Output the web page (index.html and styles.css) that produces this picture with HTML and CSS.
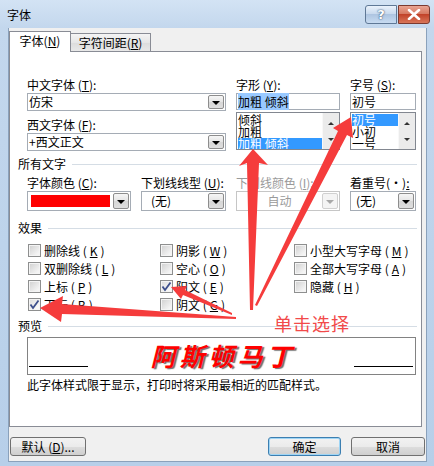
FILE: index.html
```html
<!DOCTYPE html>
<html lang="zh-CN">
<head>
    <meta charset="UTF-8">
    <title>字体</title>
    <link rel="stylesheet" href="styles.css">
</head>
<body>
    <div class="window">
        <!-- Title bar -->
        <div class="titlebar">
            <span class="title">字体</span>
            <div class="caption-btns">
                <span class="cap help">?</span>
                <span class="cap close">
                    <svg width="14" height="11" viewBox="0 0 14 11"><path d="M2 1 L12 10 M12 1 L2 10" stroke="#fff" stroke-width="2.6" stroke-linecap="round"/></svg>
                </span>
            </div>
        </div>

        <div class="client">
            <div class="tabs">
                <div class="tab active">字体(<u>N</u>)</div>
                <div class="tab">字符间距(<u>R</u>)</div>
            </div>

            <div class="panel">
                <!-- Font family / style / size -->
                <div class="font-grid">
                    <div class="field-col">
                        <div class="lbl">中文字体 (<u>T</u>):</div>
                        <div class="combo"><span class="combo-text">仿宋</span><span class="drop"></span></div>
                        <div class="lbl second">西文字体 (<u>F</u>):</div>
                        <div class="combo"><span class="combo-text">+西文正文</span><span class="drop"></span></div>
                    </div>
                    <div class="field-col">
                        <div class="lbl">字形 (<u>Y</u>):</div>
                        <div class="textbox"><span class="hl">加粗 倾斜</span></div>
                        <div class="list">
                            <div class="items">
                                <div>倾斜</div>
                                <div>加粗</div>
                                <div class="sel">加粗 倾斜</div>
                            </div>
                            <div class="vscroll"><span class="up"></span><span class="down"></span></div>
                        </div>
                    </div>
                    <div class="field-col">
                        <div class="lbl">字号 (<u>S</u>):</div>
                        <div class="textbox">初号</div>
                        <div class="list">
                            <div class="items">
                                <div class="sel">初号</div>
                                <div>小初</div>
                                <div>一号</div>
                            </div>
                            <div class="vscroll"><span class="up"></span><span class="down"></span></div>
                        </div>
                    </div>
                </div>

                <div class="group-title">所有文字</div>
                <div class="all-row">
                    <div class="field-col">
                        <div class="lbl">字体颜色 (<u>C</u>):</div>
                        <div class="combo tall"><span class="swatch"></span><span class="drop"></span></div>
                    </div>
                    <div class="field-col">
                        <div class="lbl">下划线线型 (<u>U</u>):</div>
                        <div class="combo tall"><span class="combo-text pad-u">(无)</span><span class="drop"></span></div>
                    </div>
                    <div class="field-col disabled">
                        <div class="lbl">下划线颜色 (<u>I</u>):</div>
                        <div class="combo tall"><span class="combo-text center">自动</span><span class="drop"></span></div>
                    </div>
                    <div class="field-col">
                        <div class="lbl">着重号(·)<u>:</u></div>
                        <div class="combo tall"><span class="combo-text pad-e">(无)</span><span class="drop"></span></div>
                    </div>
                </div>

                <div class="group-title">效果</div>
                <div class="effects">
                    <div class="cb-item"><span class="cb"></span>删除线 (<u>K</u>)</div>
                    <div class="cb-item"><span class="cb"></span>阴影 (<u>W</u>)</div>
                    <div class="cb-item"><span class="cb"></span>小型大写字母 (<u>M</u>)</div>
                    <div class="cb-item"><span class="cb"></span>双删除线 (<u>L</u>)</div>
                    <div class="cb-item"><span class="cb"></span>空心 (<u>O</u>)</div>
                    <div class="cb-item"><span class="cb"></span>全部大写字母 (<u>A</u>)</div>
                    <div class="cb-item"><span class="cb"></span>上标 (<u>P</u>)</div>
                    <div class="cb-item"><span class="cb checked"><svg width="11" height="11" viewBox="0 0 11 11"><path d="M1.5 5.5 L4 9 L9.5 1.5" fill="none" stroke="#3d4f8c" stroke-width="1.8"/></svg></span>阳文 (<u>E</u>)</div>
                    <div class="cb-item"><span class="cb"></span>隐藏 (<u>H</u>)</div>
                    <div class="cb-item"><span class="cb checked"><svg width="11" height="11" viewBox="0 0 11 11"><path d="M1.5 5.5 L4 9 L9.5 1.5" fill="none" stroke="#3d4f8c" stroke-width="1.8"/></svg></span>下标 (<u>B</u>)</div>
                    <div class="cb-item"><span class="cb"></span>阴文 (<u>G</u>)</div>
                </div>

                <div class="group-title">预览</div>
                <div class="preview">
                    <span class="base-line"></span>
                    <span class="sample">阿斯顿马丁</span>
                    <span class="base-line"></span>
                </div>
                <p class="note">此字体样式限于显示，打印时将采用最相近的匹配样式。</p>
            </div>

            <div class="buttons">
                <div class="btn wide">默认 (<u>D</u>)...</div>
                <div class="btn ok">确定</div>
                <div class="btn">取消</div>
            </div>
        </div>

        <!-- red annotation arrows -->
        <svg class="annot" width="434" height="466" viewBox="0 0 434 466">
            <g fill="#f53c3c">
                <polygon points="253,149 268,165 259,163 253,310 250,310 247,163 239,166"/>
                <polygon points="351,117 353,138 347,135 257,306 255,305 338,131 333,128"/>
                <polygon points="171,287 187,286 185,290 232,313 232,315 183,295 181,299"/>
                <polygon points="40,308 63,296 62,304 236,317 236,319 62,314 61,322"/>
            </g>
        </svg>
        <div class="annot-text">单击选择</div>
    </div>
</body>
</html>
```

FILE: styles.css
```css
/* Win7 style font dialog */
* {
    box-sizing: border-box;
}

body {
    margin: 0;
    font-family: "Noto Sans CJK SC", "Noto Sans", sans-serif;
    font-size: 12px;
    color: #000;
    background: #bcd4ec;
}

u {
    text-decoration: underline;
    text-underline-offset: 1px;
}

.window {
    position: relative;
    width: 434px;
    height: 466px;
    display: flex;
    flex-direction: column;
    background: linear-gradient(180deg, #d3e3f4 0, #c3d7ed 28px, #b7cfe9 100%);
    overflow: hidden;
}

/* Title bar */
.titlebar {
    height: 28px;
    display: flex;
    align-items: flex-start;
    padding: 0 4px 0 7px;
    flex-shrink: 0;
}

.title {
    margin-top: 8px;
    line-height: 14px;
}

.caption-btns {
    margin-left: auto;
    margin-top: 5px;
    display: flex;
    gap: 1px;
}

.cap {
    width: 32px;
    height: 19px;
    display: flex;
    align-items: center;
    justify-content: center;
    border: 1px solid #5f7896;
}

.cap.help {
    border-radius: 3px 0 0 3px;
    background: linear-gradient(#eaf2fb, #c9daee 45%, #aec5e1 50%, #c7dbf1);
    color: #fff;
    font-family: "DejaVu Sans", sans-serif;
    font-weight: bold;
    font-size: 13px;
    text-shadow: 0 0 2px #3a5577, 0 0 1px #3a5577;
}

.cap.close {
    border-radius: 0 3px 3px 0;
    border-color: #7b3a30;
    background: linear-gradient(#eaa593, #d67a63 45%, #c2432a 50%, #d8765a);
}

/* Client area */
.client {
    flex: 1;
    margin: 0 7px 4px 8px;
    background: #f0f0f0;
    border: 1px solid #8aa1bb;
    border-top: none;
    padding: 3px 1px 0 0;
    display: flex;
    flex-direction: column;
}

.tabs {
    display: flex;
    align-items: flex-end;
    height: 21px;
    margin-bottom: -1px;
    position: relative;
    z-index: 1;
}

.tab {
    height: 18px;
    margin-bottom: 1px;
    width: 80px;
    border: 1px solid #898c95;
    border-bottom: none;
    border-left: none;
    background: linear-gradient(#f4f4f4, #e6e6e6 50%, #dcdcdc 51%, #e8e8e8);
    display: flex;
    align-items: center;
    justify-content: center;
    line-height: 14px;
}

.tab.active {
    width: 62px;
    height: 21px;
    margin-bottom: 0;
    border-left: 1px solid #898c95;
    background: #fff;
    padding-bottom: 2px;
}

.panel {
    width: 413px;
    height: 376px;
    background: #fff;
    border: 1px solid #898c95;
    padding: 25px 4px 0 8px;
}

.font-grid {
    display: grid;
    grid-template-columns: 199px 104px 66px;
    column-gap: 10px;
    margin-left: 9px;
}

.field-col {
    display: flex;
    flex-direction: column;
}

.lbl {
    height: 16px;
    line-height: 16px;
    white-space: nowrap;
}

.lbl.second {
    margin-top: 6px;
}

.combo {
    height: 18px;
    border: 1px solid #a5acb5;
    background: #fff;
    display: flex;
    align-items: stretch;
}

.combo.tall {
    height: 20px;
}

.combo-text {
    flex: 1;
    padding-left: 1px;
    line-height: 16px;
    white-space: nowrap;
}

.combo.tall .combo-text {
    line-height: 18px;
}

.combo-text.pad-u {
    padding-left: 9px;
}

.combo-text.pad-e {
    padding-left: 5px;
}

.combo-text.center {
    text-align: center;
}

.drop {
    width: 16px;
    margin: 1px;
    border: 1px solid #8d8d8d;
    border-radius: 2px;
    background: linear-gradient(#f6f6f6, #e4e4e4 50%, #d6d6d6 51%, #dedede);
    display: flex;
    align-items: center;
    justify-content: center;
}

.drop::after {
    content: "";
    border-left: 4px solid transparent;
    border-right: 4px solid transparent;
    border-top: 4px solid #000;
    margin-top: 1px;
}

.swatch {
    flex: 1;
    margin: 3px 2px 3px 3px;
    background: #ff0000;
}

.disabled .lbl,
.disabled .combo-text {
    color: #9a9a9a;
}

.disabled .combo {
    border-color: #c6c6c6;
}

.disabled .drop {
    border-color: #d0d0d0;
    background: #f4f4f4;
}

.disabled .drop::after {
    border-top-color: #a8a8a8;
}

.textbox {
    height: 17px;
    border: 1px solid #a5acb5;
    background: #fff;
    padding-left: 1px;
    line-height: 15px;
    white-space: nowrap;
}

.hl {
    background: #99c9ff;
}

.list {
    margin-top: 2px;
    height: 38px;
    border: 1px solid #828790;
    background: #fff;
    display: flex;
    overflow: hidden;
}

.items {
    flex: 1;
    line-height: 12px;
    padding-top: 1px;
    padding-left: 1px;
    white-space: nowrap;
}

.items .sel {
    background: #3399ff;
    color: #fff;
}

.vscroll {
    width: 17px;
    background: #ebebeb;
    border-left: 1px solid #f8f8f8;
    display: flex;
    flex-direction: column;
    justify-content: space-between;
    align-items: center;
    padding: 9px 0 8px;
}

.vscroll .up,
.vscroll .down {
    width: 0;
    height: 0;
    border-left: 3px solid transparent;
    border-right: 3px solid transparent;
}

.vscroll .up {
    border-bottom: 3px solid #333;
}

.vscroll .down {
    border-top: 3px solid #333;
}

/* Section headers */
.group-title {
    margin-top: 6px;
    height: 14px;
    line-height: 14px;
    display: flex;
    align-items: center;
    gap: 6px;
}

.group-title::after {
    content: "";
    flex: 1;
    height: 1px;
    background: #d5dde5;
}

.all-row {
    display: grid;
    grid-template-columns: 104px 85px 104px 66px;
    column-gap: 10px;
    margin: 4px 0 10px 9px;
}

.effects {
    display: grid;
    grid-template-columns: 132px 134px auto;
    grid-auto-rows: 18px;
    margin: 6px 0 0 10px;
}

.cb-item {
    display: flex;
    align-items: center;
    gap: 3px;
    white-space: nowrap;
}

.cb {
    width: 13px;
    height: 13px;
    border: 1px solid #8e8f8f;
    background: linear-gradient(135deg, #cfcfcf, #f4f4f4 80%);
    box-shadow: inset 0 0 0 1px #f4f4f4;
    display: flex;
    align-items: center;
    justify-content: center;
}

.cb.checked {
    background: linear-gradient(135deg, #dcdcdc, #f8f8f8 80%);
}

/* Preview */
.preview {
    margin: 4px 0 0 9px;
    width: 389px;
    height: 38px;
    border: 1px solid #828282;
    display: flex;
    align-items: flex-start;
    padding: 0 2px 0 1px;
}

.base-line {
    width: 59px;
    height: 1px;
    margin-top: 28px;
    background: #000;
}

.sample {
    flex: 1;
    text-align: center;
    font-size: 25px;
    line-height: 34px;
    font-weight: bold;
    font-style: italic;
    letter-spacing: 4px;
    color: #ff0000;
    text-shadow: 2px 1px 1px #6f6f6f;
    padding-left: 4px;
}

.note {
    margin: 2px 0 0 9px;
    line-height: 16px;
    white-space: nowrap;
}

/* Bottom buttons */
.buttons {
    margin-top: 10px;
    display: flex;
    gap: 10px;
    padding-left: 1px;
}

.btn {
    width: 74px;
    height: 19px;
    border: 1px solid #707070;
    border-radius: 3px;
    background: linear-gradient(#f2f2f2, #ebebeb 50%, #dddddd 51%, #cfcfcf);
    display: flex;
    align-items: center;
    justify-content: center;
    line-height: 14px;
}

.btn.wide {
    width: 76px;
    margin-right: auto;
}

.btn.ok {
    width: 73px;
    border-color: #3c7fb1;
    box-shadow: inset 0 0 0 1px #9fd5f5;
}

/* Annotation overlay */
.annot {
    position: absolute;
    top: 0;
    left: 0;
    pointer-events: none;
}

.annot-text {
    position: absolute;
    left: 274px;
    top: 312px;
    font-size: 18px;
    line-height: 22px;
    letter-spacing: 1px;
    color: #f24a4a;
}
```
